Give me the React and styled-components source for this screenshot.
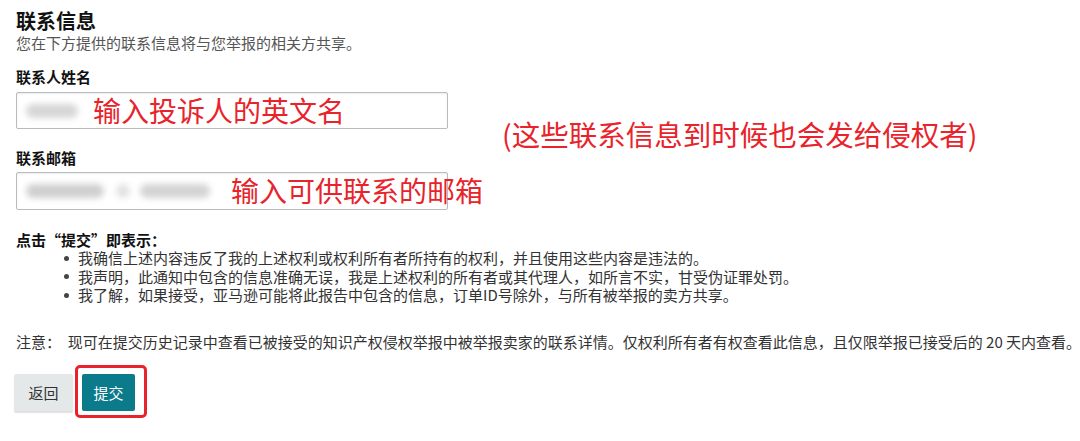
import styled, { createGlobalStyle } from 'styled-components'

const GlobalStyle = createGlobalStyle`
    body {
        margin: 0;
        background: #ffffff;
        font-family: "Noto Sans CJK SC", "Noto Sans", sans-serif;
        color: #222;
    }
`

const Page = styled.div`
    width: 1080px;
    height: 441px;
    padding: 9px 16px 0px 16px;
    box-sizing: border-box;
    overflow: hidden;
`

const Title = styled.h2`
    margin: 0px;
    font-size: 20px;
    line-height: 24px;
    font-weight: 700;
    color: #111;
`

const Subtitle = styled.p`
    margin: 0px;
    font-size: 15px;
    line-height: 20px;
    color: #555;
`

const ContactBlock = styled.div`
    display: grid;
    grid-template-columns: 432px 1fr;
    column-gap: 54px;
    align-items: center;
    margin-top: 14px;
`

const Fields = styled.div`
    display: flex;
    flex-direction: column;
`

const Label = styled.div`
    font-size: 15px;
    line-height: 20px;
    font-weight: 700;
    color: #111;
    margin-top: ${props => props.first ? '0px' : '19px'};
`

const FieldBox = styled.div`
    position: relative;
    margin-top: ${props => props.gap}px;
    height: ${props => props.h}px;
    box-sizing: border-box;
    border: 1px solid #b9bcbc;
    border-radius: 2px;
    box-shadow: inset 0px 1px 2px rgba(0, 0, 0, 0.08);
    display: flex;
    align-items: center;
    padding-left: 9px;
`

const Blur = styled.span`
    display: inline-block;
    width: ${props => props.w}px;
    height: 14px;
    margin-right: ${props => props.mr}px;
    background: ${props => props.c};
    border-radius: 7px;
    filter: blur(3px);
`

const Mark = styled.span`
    position: absolute;
    left: ${props => props.left}px;
    top: 50%;
    transform: translateY(-52%);
    white-space: nowrap;
    font-size: 28px;
    line-height: 32px;
    color: #e8232b;
`

const SideNote = styled.div`
    font-size: 28.5px;
    line-height: 36px;
    color: #e8232b;
    white-space: nowrap;
    margin-bottom: 10px;
`

const Terms = styled.div`
    margin-top: 20px;
`

const TermsHead = styled.div`
    font-size: 15px;
    line-height: 20px;
    font-weight: 700;
    color: #111;
`

const BulletList = styled.div`
    display: flex;
    flex-direction: column;
    margin-top: -1px;
`

const Bullet = styled.div`
    display: flex;
    align-items: center;
    font-size: 15px;
    line-height: 18.5px;
    color: #333;
    padding-left: 48px;

    &::before {
        content: '';
        width: 5px;
        height: 5px;
        border-radius: 50%;
        background: #444;
        margin-right: 9px;
    }
`

const Note = styled.p`
    margin: 27px 0px 0px 0px;
    font-size: 15px;
    line-height: 20px;
    color: #333;
    white-space: nowrap;
`

const Buttons = styled.div`
    display: flex;
    align-items: center;
    margin-top: 15px;
    margin-left: -2px;
`

const Button = styled.button`
    font-family: inherit;
    font-size: 15px;
    height: 37px;
    border: none;
    border-radius: 2px;
    cursor: pointer;
    background: ${props => props.primary ? '#0b7a8b' : '#e4e8e8'};
    color: ${props => props.primary ? '#ffffff' : '#333'};
    width: ${props => props.primary ? '53px' : '59px'};
    box-shadow: ${props => props.primary ? 'none' : '0px 2px 1px rgba(0, 0, 0, 0.12)'};
    padding: 0px;
`

const Highlight = styled.div`
    display: flex;
    margin-left: 2px;
    padding: 6px 9px 4px 4px;
    border: 3px solid #e8232b;
    border-radius: 5px;
    margin-top: -2px;
`

const bullets = [
    '我确信上述内容违反了我的上述权利或权利所有者所持有的权利，并且使用这些内容是违法的。',
    '我声明，此通知中包含的信息准确无误，我是上述权利的所有者或其代理人，如所言不实，甘受伪证罪处罚。',
    '我了解，如果接受，亚马逊可能将此报告中包含的信息，订单ID号除外，与所有被举报的卖方共享。',
]

const App = () => {
    return <>
        <GlobalStyle />
        <Page>
            <Title>联系信息</Title>
            <Subtitle>您在下方提供的联系信息将与您举报的相关方共享。</Subtitle>
            <ContactBlock>
                <Fields>
                    <Label first>联系人姓名</Label>
                    <FieldBox gap={5} h={37}>
                        <Blur w={52} mr={0} c="#d6d6d6" />
                        <Mark left={76}>输入投诉人的英文名</Mark>
                    </FieldBox>
                    <Label>联系邮箱</Label>
                    <FieldBox gap={4} h={38}>
                        <Blur w={78} mr={12} c="#cfcfcf" />
                        <Blur w={14} mr={10} c="#e2e2e2" />
                        <Blur w={70} mr={0} c="#d3d3d3" />
                        <Mark left={214}>输入可供联系的邮箱</Mark>
                    </FieldBox>
                </Fields>
                <SideNote>(这些联系信息到时候也会发给侵权者)</SideNote>
            </ContactBlock>
            <Terms>
                <TermsHead>点击“提交”即表示：</TermsHead>
                <BulletList>
                    {bullets.map((e, i) => <Bullet key={i}>{e}</Bullet>)}
                </BulletList>
            </Terms>
            <Note>注意：&nbsp; 现可在提交历史记录中查看已被接受的知识产权侵权举报中被举报卖家的联系详情。仅权利所有者有权查看此信息，且仅限举报已接受后的 20 天内查看。</Note>
            <Buttons>
                <Button>返回</Button>
                <Highlight>
                    <Button primary>提交</Button>
                </Highlight>
            </Buttons>
        </Page>
    </>
}

export default App
